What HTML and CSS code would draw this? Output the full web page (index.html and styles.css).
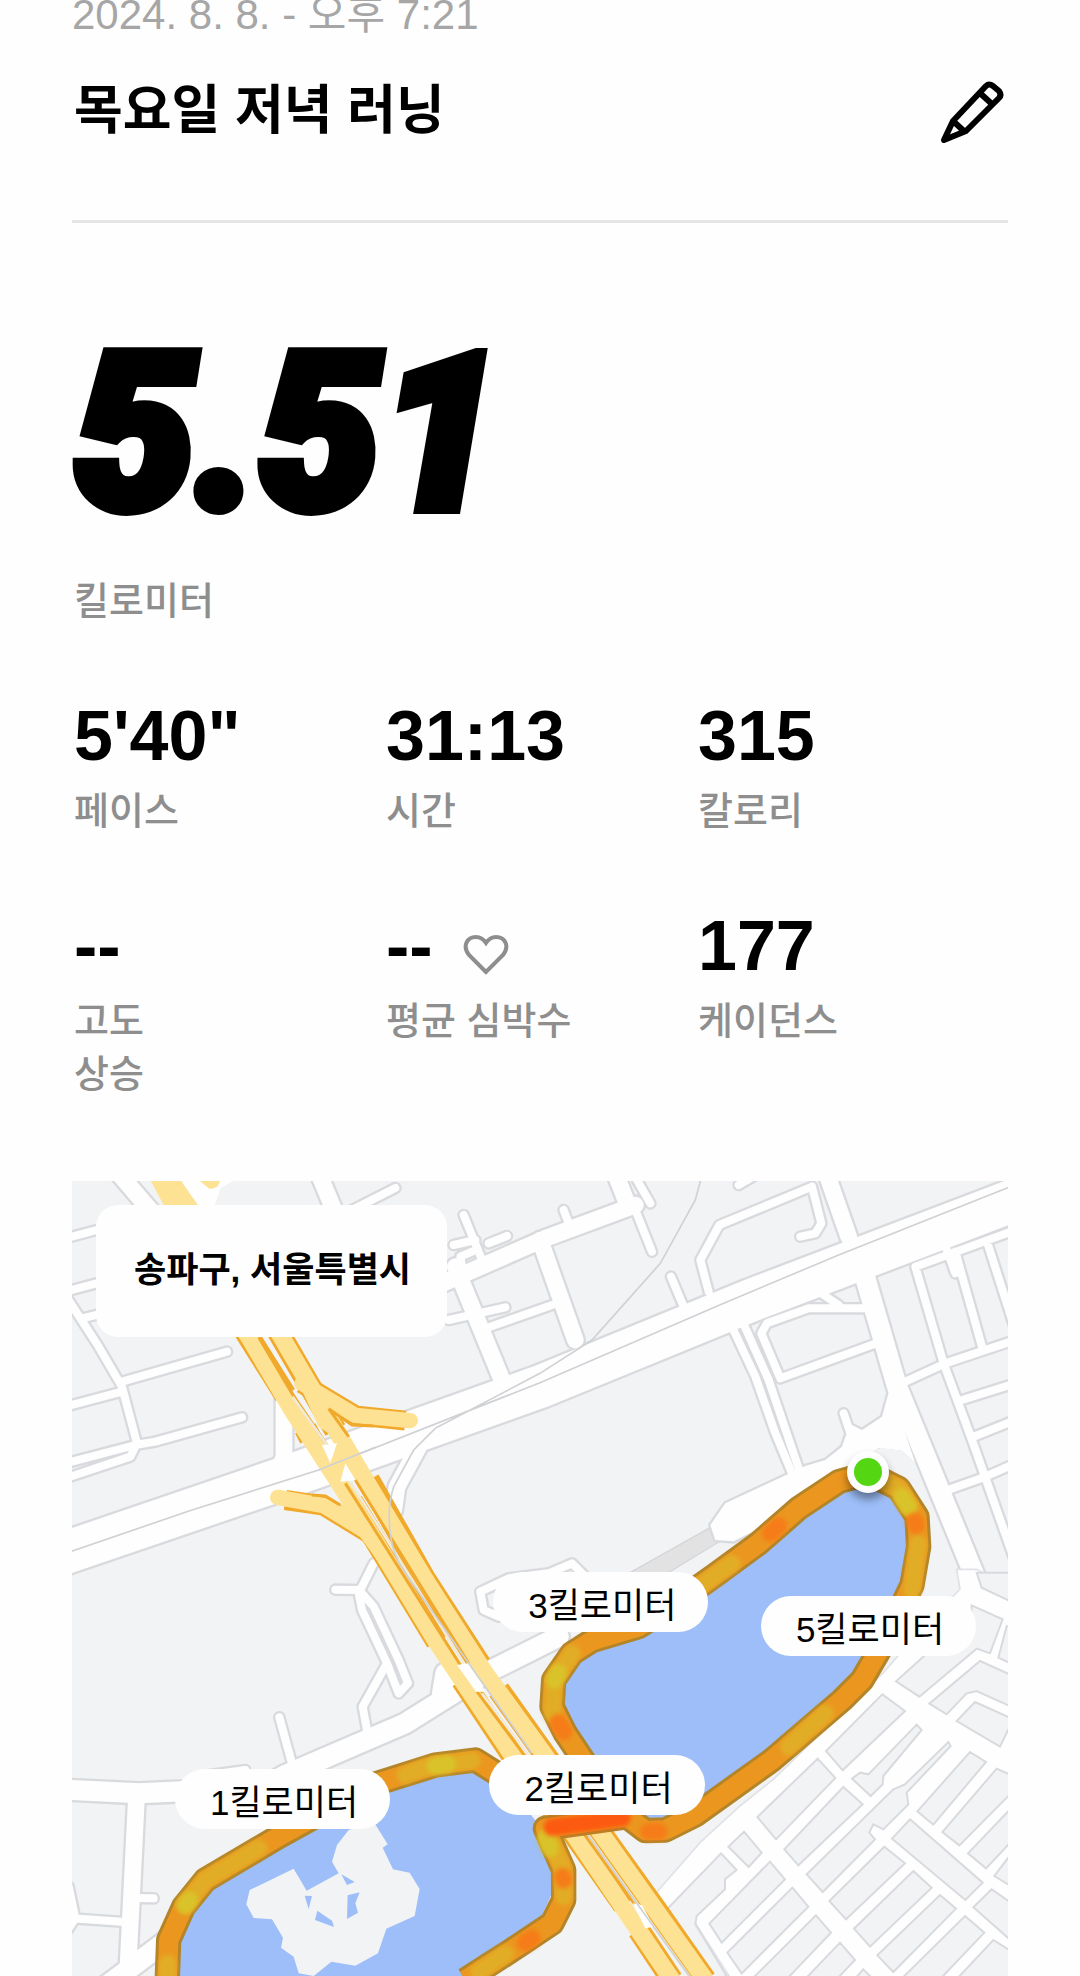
FILE: index.html
```html
<!DOCTYPE html>
<html lang="ko">
<head>
    <meta charset="UTF-8">
    <meta name="viewport" content="width=device-width, initial-scale=1.0">
    <title>목요일 저녁 러닝</title>
    <link rel="stylesheet" href="styles.css">
</head>
<body>

<main class="run">
    <header class="run-header">
        <div class="run-date">2024. 8. 8. - 오후 7:21</div>
        <div class="title-row">
            <h1 class="run-title">목요일 저녁 러닝</h1>
            <button class="edit-button" type="button" aria-label="이름 수정">
                <svg class="edit-icon" viewBox="-5 -4 90 90">
                    <path d="M15 70 L24 51 L57 16 Q60 13 64 16 L70 21 Q73 25 70 28 L37 61 Z M52 24 L64 35 M24 51 L36 62"/>
                </svg>
            </button>
        </div>
    </header>

    <section class="distance">
        <div class="distance-value">5.51</div>
        <div class="label">킬로미터</div>
    </section>

    <section class="stats">
        <div class="stat">
            <div class="value">5'40"</div>
            <div class="label">페이스</div>
        </div>
        <div class="stat">
            <div class="value">31:13</div>
            <div class="label">시간</div>
        </div>
        <div class="stat">
            <div class="value">315</div>
            <div class="label">칼로리</div>
        </div>
        <div class="stat">
            <div class="value">--</div>
            <div class="label">고도<br>상승</div>
        </div>
        <div class="stat">
            <div class="value">--
                <svg class="heart-icon" viewBox="0 0 46 42">
                    <path d="M23 38 L6 21 C-1 12 4 3 13 3 C18 3 21 6 23 9 C25 6 28 3 33 3 C42 3 47 12 40 21 Z"/>
                </svg>
            </div>
            <div class="label">평균 심박수</div>
        </div>
        <div class="stat">
            <div class="value">177</div>
            <div class="label">케이던스</div>
        </div>
    </section>

    <section class="map">
        <svg class="map-canvas" viewBox="0 3 2808 2385">
            <defs>
                <!-- Roads are drawn twice: once as the grey edge, once as the white surface -->
                <g id="roads">
                    <!-- main avenue -->
                    <path class="avenue" d="M-60 1132 L620 900 L1404 620 L2040 360 L2880 40"/>
                    <!-- upper left streets -->
                    <path class="lane" d="M-20 175 L300 90 M-20 335 L300 250 M30 415 L300 350 M-30 330 L80 500 L150 620 L195 790 L175 830 L-20 895 M150 605 L465 515 M-20 680 L150 635 M-20 850 L190 795 L250 785 L510 712"/>
                    <path class="street" d="M140 -20 L260 120 M740 -20 L790 100"/>
                    <path class="lane" d="M820 100 L970 24"/>
                    <path class="street" d="M636 650 L636 830 L610 900"/>
                    <!-- upper middle streets -->
                    <path class="street" d="M1090 320 L1420 175 L1690 75 M1150 260 L1290 600 M1404 180 L1510 480"/>
                    <path class="lane" d="M1175 105 L1230 240 M1145 195 L1210 180 M1250 190 L1305 168 M1130 420 L1300 382 M1255 440 L1440 375 M1170 260 L1165 230 L1200 215"/>
                    <path class="street" d="M1630 -20 L1665 70"/>
                    <path class="lane" d="M1475 90 L1490 130 M1695 0 L1735 70 M1690 90 L1740 215 M1797 290 L1835 380 M2000 15 L2060 -20 M2220 20 L1942 135 L1885 240 L1910 335 M2220 20 L2248 130 L2230 160 L2185 170"/>
                    <path class="street" d="M2260 -30 L2330 170"/>
                    <!-- streets south of the avenue -->
                    <path class="wide" d="M2370 260 L2475 620 L2750 1290 L2810 1420"/>
                    <path class="lane" d="M2380 385 L2210 385 L2085 430 L2068 460 L2125 595 L2440 480 M2255 345 L2300 375"/>
                    <path class="lane" d="M1975 430 L2050 590 L2110 760 L2160 880"/>
                    <path class="lane" d="M2005 410 L2090 600 L2185 880"/>
                    <path class="lane" d="M2315 700 L2345 790"/>
                    <!-- east streets -->
                    <path class="lane" d="M2610 170 L2650 280 M2830 150 L2530 260 L2615 550 L2700 780 L2870 1260 M2650 215 L2730 500 M2745 185 L2830 450 M2500 605 L2620 550 L2830 480 M2670 660 L2830 610 M2705 770 L2830 720 M2600 940 L2740 890 L2830 850"/>
                    <!-- road along the lower lake -->
                    <path class="wide" d="M-40 1828 L200 1840 L640 1820 M560 1830 L640 1785 L1000 1630 L1240 1480 L1460 1370"/>
                    <path class="street" d="M194 1840 L165 2420"/>
                    <path class="lane" d="M0 2215 L160 2226 M-10 2120 L10 2215 L-20 2260 M190 2154 L245 2155 M622 1612 L660 1750 M410 1785 L520 1770"/>
                    <path class="lane" d="M905 1150 L865 1230 L790 1229 M860 1240 L870 1290 L945 1450 L872 1580 L885 1650 M870 1240 L905 1280 L980 1440 L1008 1510 L980 1540 L945 1450"/>
                    <path class="wide" d="M1120 1480 L1110 1540"/>
                    <path class="wide" d="M60 2450 L300 2270"/>
                    <path class="street" d="M1040 800 L975 920 L965 990"/>
                    <path class="lane" d="M1225 1235 L1235 1290 L1280 1310 M1225 1235 L1310 1195 L1430 1180 L1500 1150 L1540 1190"/>
                    <!-- parking apron by the start -->
                    <path class="apron" d="M2200 858 L1960 970 L1915 1035 L1930 1080 L1985 1084 L2200 975 L2290 890 L2420 804 L2490 812 L2530 850 L2480 700 L2452 630 L2430 710 L2370 750 L2340 735 L2320 770 L2310 800 L2260 840 Z"/>
                </g>
                <path id="route" d="M2389 880 L2300 905 L2180 985 L2060 1090 L1930 1185 L1810 1270 L1700 1340 L1560 1382 L1500 1420 L1445 1500 L1440 1580 L1480 1660 L1540 1750 L1620 1860
                    M2389 880 L2480 925 L2535 1010 L2540 1100 L2520 1215 L2440 1380 L2370 1500 L2310 1560 L2100 1740 L1870 1905 L1780 1950 L1720 1952 L1665 1910 L1420 1945 L1475 2070 L1475 2160 L1440 2230 L1320 2310 L1180 2400
                    M1290 1790 L1210 1740 L1090 1755 L900 1815 L620 1970 L400 2100 L335 2180 L290 2280 L285 2420"/>
            </defs>

            <rect class="land" width="2808" height="2388"/>

            <!-- pedestrian strip -->
            <path class="strip" d="M1670 1180 L1910 1045 L1950 1080 L1770 1190 Z"/>
            <use href="#roads" class="edge"/>
            <use href="#roads" class="surface"/>
            <path class="ward" d="M2380 824 L2425 804 L2490 812 L2530 850 L2630 1110 L2700 1270 L2640 1330 L2550 1180 L2470 870 Z"/>

            <!-- south east grid -->
            <g transform="translate(1404 1188)">
                <path class="grid-ground" d="M1250 -20 L1260 40 L1170 130 L1030 290 L700 610 L600 690 L480 800 L340 960 L376 1005 L465 1040 L580 1220 L1440 1220 L1440 50 L1310 -20 Z"/>
                <path class="block" d="M1295 88 L1388 130 L1350 232 L1310 218 L1138 362 L1068 316 L1180 215 L1290 190 Z
                    M1320 255 L1420 300 L1420 395 L1310 345 L1280 352 L1220 415 L1168 383 Z
                    M1305 378 L1420 430 L1380 512 L1250 435 Z M1400 150 L1430 160 L1430 270 L1375 245 Z
                    M1027 355 L1095 405 L908 583 L858 525 Z
                    M833 548 L886 606 L708 790 L652 723 Z
                    M910 633 L968 685 L775 868 L733 820 Z
                    M1130 446 L1145 462 L1030 600 L1028 625 L992 660 L936 608 L960 590 L985 595 Z
                    M1225 498 L1232 510 L1100 650 L1105 685 L1030 760 L1000 745 L988 770 L1005 790 L848 948 L800 895 L1060 640 L1095 625 Z
                    M612 767 L665 830 L626 873 L565 812 Z
                    M543 832 L590 882 L555 910 L555 940 L470 1020 L466 1045 L560 1200 L500 1220 L376 1005 Z
                    M690 857 L735 910 L545 1100 L508 1043 Z
                    M757 935 L805 992 L605 1192 L562 1130 Z
                    M828 1018 L873 1070 L730 1220 L650 1220 L640 1205 Z
                    M1033 812 L1095 862 L918 1030 L868 975 Z
                    M1120 885 L1175 935 L990 1112 L942 1058 Z
                    M1200 957 L1248 998 L1060 1188 L1012 1138 Z
                    M1275 1020 L1333 1070 L1190 1220 L1090 1220 L1088 1205 Z
                    M1360 1092 L1420 1130 L1420 1220 L1240 1220 Z
                    M1110 730 L1328 920 L1276 972 L1056 788 Z
                    M1290 528 L1338 558 L1180 746 L1132 706 Z
                    M1370 578 L1420 600 L1420 645 L1258 808 L1207 768 Z
                    M1420 690 L1420 790 L1338 877 L1284 832 Z
                    M1420 825 L1420 935 L1363 900 Z
                    M1355 940 L1420 985 L1420 1100 L1300 994 Z
                    M900 1100 L945 1152 L880 1220 L785 1220 Z
                    M970 1180 L1010 1220 L935 1220 Z
                    M1310 -10 L1420 -10 L1420 80 L1325 35 Z"/>
            </g>

            <!-- avenue centre line and railway -->
            <path class="thin" d="M-20 1120 L360 990 L740 870 L1404 608 L1950 372 L2300 225 L2828 15 M1886 0 L1870 60 L1765 250 L1560 480 L1404 580 L1090 745"/>

            <!-- lakes -->
            <path class="water" d="M2389 900 L2300 920 L2180 1000 L2060 1100 L1930 1200 L1700 1345 L1560 1390 L1500 1430 L1450 1500 L1445 1580 L1490 1660 L1620 1860 L1680 1930 L1780 1940 L1870 1895 L2100 1730 L2310 1550 L2430 1380 L2515 1215 L2530 1100 L2525 1010 L2470 930 Z"/>
            <path class="water" d="M1290 1800 L1210 1750 L1090 1765 L900 1825 L620 1980 L405 2110 L340 2190 L300 2280 L290 2400 L1180 2400 L1320 2300 L1400 2230 L1440 2140 L1450 2060 L1410 1945 Z"/>
            <path class="island" d="M905 1925 L947 1993 L932 2003 L963 2068 L1013 2078 L1043 2127 L1028 2208 L943 2246 L918 2320 L850 2357 L778 2345 L725 2388 L680 2380 L665 2330 L627 2303 L633 2273 L600 2218 L545 2214 L523 2173 L533 2130 L665 2066 L704 2132 L800 2080 L780 2045 L795 1995 L830 1950 Z"/>
            <path class="water" d="M808 2083 L848 2106 L825 2115 Z M827 2146 L863 2137 L850 2170 L858 2198 L825 2217 Z M698 2147 L720 2148 L710 2187 Z M736 2192 L780 2222 L786 2241 L729 2220 Z"/>

            <!-- expressway -->
            <path class="white" d="M330 0 L490 0 L445 25 L425 85 L360 85 Z"/>
            <path class="exit" d="M235 0 L325 0 L385 85 L280 85 Z M380 0 H445 Q440 28 412 26 Z"/>
            <path class="highway-edge ramp" d="M690 610 L850 706 L1000 722 M640 960 L755 977 L890 1060"/>
            <path class="highway-edge" d="M480 390 L530 470 L640 645 M700 745 L715 775 M840 965 L1095 1385 M1170 1500 L1390 1830 L1500 1955 L1655 2175 M1700 2250 L1800 2400 M610 440 L790 750 M890 900 L1060 1200 L1225 1455 M1280 1530 L1530 1880 L1760 2200 L1900 2400"/>
            <path class="highway ramp" d="M690 610 L850 706 L1015 722 M617 952 L755 977 L890 1060"/>
            <path class="exit" d="M630 500 L722 610 L860 690 L840 725 L768 686 L830 800 L740 740 Z M700 965 L800 975 L850 985 L930 1160 L858 1062 L755 990 Z"/>
            <path class="highway" d="M480 390 L530 470 L660 690 L850 985 L1090 1380 L1390 1830 L1500 1955 L1800 2400 M610 440 L880 900 L1060 1200 L1240 1480 L1530 1880 L1900 2400"/>
            <path class="exit" d="M790 800 L830 800 L870 860 L800 900 L770 860 Z"/>
            <path class="ramp-line" d="M560 472 L660 640 L768 800 M770 686 L830 770 M770 686 L840 735 L905 738 M805 975 L760 948 L720 945 M820 910 L1010 1210 L1165 1455 M1215 1535 L1390 1770 M850 900 L1035 1200 L1190 1450 M1535 1960 L1700 2190"/>
            <path class="median" d="M662 650 L765 795 M835 905 L1030 1215 L1175 1450 M1230 1540 L1380 1740 M1545 1960 L1860 2400"/>
            <path class="white" d="M750 795 L795 790 L775 850 Z M820 850 L850 900 L805 905 Z M1155 1455 L1190 1450 L1240 1535 L1212 1535 Z M1682 2170 L1710 2175 L1745 2240 L1720 2245 Z"/>
            <path class="thin" d="M740 870 L910 802 M1090 745 L1025 810 L965 920 Q945 980 955 1060 Q960 1120 1000 1180 L1380 1720 M1540 1955 L1860 2400"/>

            <!-- route, coloured by pace -->
            <use href="#route" class="route-edge"/>
            <use href="#route" class="route"/>
            <path class="pace-mid" d="M2400 890 L2480 925 L2510 980 M2538 1090 L2520 1230 M1980 1150 L1800 1280 M1500 1420 L1446 1500 L1441 1600 M2260 1600 L2150 1700 M1425 1960 L1470 2060 L1475 2150 M1200 1742 L1060 1762 L1000 1785 M560 2005 L400 2100 L340 2175 M287 2350 L285 2400 M1300 2322 L1220 2375"/>
            <path class="pace-slow" d="M2490 950 L2510 980 M1835 1255 L1800 1278 M1458 1478 L1448 1500 M1422 1975 L1434 2005 M1125 1752 L1090 1757 M352 2160 L340 2175"/>
            <path class="pace-fast" d="M2528 1025 L2532 1035 M2120 1038 L2095 1060 M1458 1628 L1475 1655 M1760 1954 L1730 1954 M1475 2100 L1472 2090 M1380 2275 L1360 2288"/>
            <path class="pace-peak" d="M1650 1914 L1440 1942"/>
        </svg>

        <div class="place">송파구, 서울특별시</div>
        <div class="start-pin"></div>
        <div class="km km-3">3킬로미터</div>
        <div class="km km-5">5킬로미터</div>
        <div class="km km-1">1킬로미터</div>
        <div class="km km-2">2킬로미터</div>
    </section>
</main>

</body>
</html>
```

FILE: styles.css
```css
* {
    margin: 0;
    padding: 0;
    box-sizing: border-box;
}

body {
    background-color: #fefefe;
    color: #000;
    font-family: "Liberation Sans", "Noto Sans CJK KR", sans-serif;
}

.run {
    padding: 0 72px;
}

/* Header */
.run-header {
    border-bottom: 3px solid #e5e5e5;
    padding-bottom: 72px;
}

.run-date {
    font-size: 42px;
    line-height: 30px;
    color: #a6a6a6;
}

.title-row {
    display: flex;
    justify-content: space-between;
    align-items: center;
    margin-top: 44px;
}

.run-title {
    font-size: 53px;
    line-height: 74px;
    font-weight: 700;
    padding-left: 2px;
}

.edit-button {
    width: 78px;
    height: 74px;
    background: none;
    border: none;
    cursor: pointer;
    display: flex;
    align-items: center;
    justify-content: center;
}

.edit-icon {
    flex: none;
    width: 90px;
    height: 90px;
    fill: none;
    stroke: #000;
    stroke-width: 6;
    stroke-linejoin: round;
}

/* Distance */
.distance {
    padding: 102px 2px 0;
}

.distance-value {
    font-family: Roboto, "Liberation Sans", sans-serif;
    font-size: 216px;
    line-height: 220px;
    font-weight: 900;
    font-style: italic;
    -webkit-text-stroke: 12px #000;
}

.label {
    font-size: 38px;
    line-height: 53px;
    font-weight: 500;
    color: #8e8e8e;
}

.distance .label {
    margin-top: 30px;
}

/* Stats */
.stats {
    display: grid;
    grid-template-columns: repeat(3, 1fr);
    row-gap: 73px;
    margin-top: 73px;
}

.stat {
    padding-left: 2px;
}

.value {
    display: flex;
    align-items: center;
    gap: 30px;
    font-size: 70px;
    line-height: 70px;
    font-weight: 700;
    margin-bottom: 14px;
}

.heart-icon {
    width: 46px;
    height: 42px;
    margin-top: 18px;
    fill: none;
    stroke: #8e8e8e;
    stroke-width: 4;
}

/* Map */
.map {
    position: relative;
    margin-top: 80px;
    overflow: hidden;
}

.map-canvas {
    display: block;
    width: 100%;
    fill: none;
}

.map-canvas .land {
    fill: #f1f3f4;
}

.strip {
    fill: #e2e2e2;
    stroke: #d4d6da;
    stroke-width: 4;
}

.edge {
    --edge: 14px;
    stroke: #d8dade;
}

.surface {
    --edge: 0px;
    stroke: #fefefe;
}

.edge,
.surface {
    stroke-linecap: round;
    stroke-linejoin: round;
}

.lane {
    stroke-width: calc(24px + var(--edge));
}

.street {
    stroke-width: calc(50px + var(--edge));
}

.wide {
    stroke-width: calc(60px + var(--edge));
}

.avenue {
    stroke-width: calc(128px + var(--edge));
}

.apron {
    fill: #fefefe;
    stroke-width: var(--edge);
}

.grid-ground {
    fill: #fefefe;
    stroke: #e0e2e5;
    stroke-width: 5;
}

.white {
    fill: #fefefe;
}

.ward,
.island {
    fill: #f1f3f4;
}

.block {
    fill: #f1f3f4;
    stroke: #d8dade;
    stroke-width: 6;
}

.thin {
    stroke: #cfd1d4;
    stroke-width: 5;
}

.water {
    fill: #9dbef8;
}

.highway-edge {
    stroke: #f0a92a;
    stroke-width: 68;
}

.highway {
    stroke: #fee293;
    stroke-width: 52;
}

.exit {
    fill: #fee293;
}

.ramp {
    stroke-width: 60;
    stroke-linejoin: round;
}

.highway.ramp {
    stroke-width: 46;
    stroke-linecap: round;
}

.ramp-line {
    stroke: #f0a92a;
    stroke-width: 9;
}

.median {
    stroke: #f1ead8;
    stroke-width: 8;
}

.route-edge {
    stroke: #b38428;
    stroke-width: 76;
    stroke-linejoin: round;
}

.route {
    stroke: #eb971f;
    stroke-width: 58;
    stroke-linejoin: round;
}

.pace-mid,
.pace-slow,
.pace-fast,
.pace-peak {
    stroke-width: 52;
    stroke-linecap: round;
    stroke-linejoin: round;
    filter: blur(7px);
}

.pace-mid {
    stroke: #e2ad26;
}

.pace-slow {
    stroke: #d9c32a;
}

.pace-fast {
    stroke: #f57c18;
}

.pace-peak {
    stroke: #fc5a10;
}

/* Labels over the map */
.place {
    position: absolute;
    left: 24px;
    top: 24px;
    padding: 37px 36px 39px 38px;
    border-radius: 22px;
    background-color: #fefefe;
    font-size: 35px;
    line-height: 56px;
    font-weight: 700;
}

.km {
    position: absolute;
    padding: 8px 32px 0 35px;
    border-radius: 30px;
    background-color: #fefefe;
    font-size: 35px;
    line-height: 52px;
}

.km-1 {
    left: 11%;
    top: 74%;
}

.km-2 {
    left: 44.6%;
    top: 72.2%;
}

.km-3 {
    left: 45%;
    top: 49.2%;
}

.km-5 {
    left: 73.6%;
    top: 52.2%;
}

.start-pin {
    position: absolute;
    left: 82.8%;
    top: 34%;
    width: 42px;
    height: 42px;
    border: 7px solid #fefefe;
    border-radius: 50%;
    background-color: #54d613;
    box-shadow: 0 6px 8px rgba(0, 0, 0, 0.4);
}
```
